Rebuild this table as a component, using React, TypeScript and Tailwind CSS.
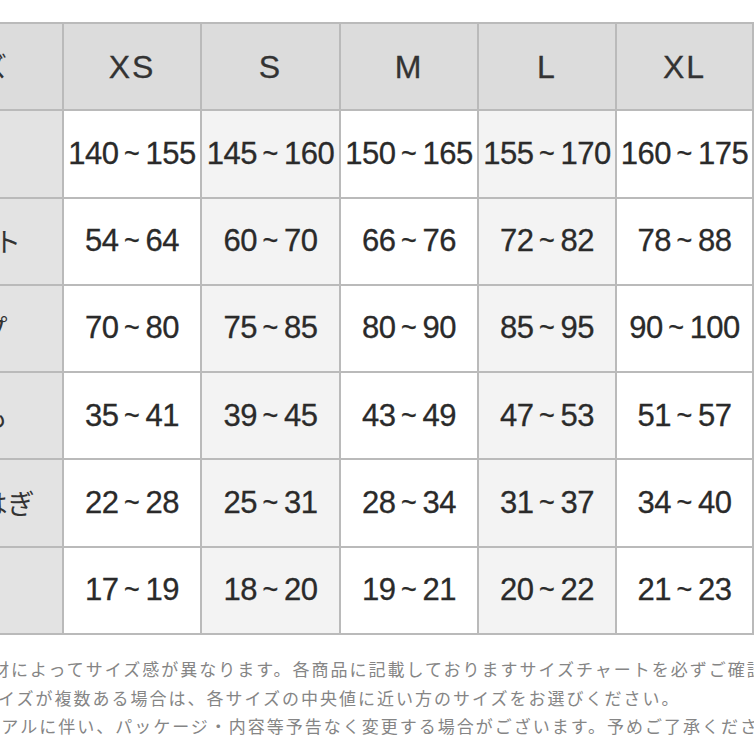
const sizes = ['XS', 'S', 'M', 'L', 'XL']

const rows: { label: string; values: [string, string][] }[] = [
  { label: '身長', values: [['140', '155'], ['145', '160'], ['150', '165'], ['155', '170'], ['160', '175']] },
  { label: 'ウエスト', values: [['54', '64'], ['60', '70'], ['66', '76'], ['72', '82'], ['78', '88']] },
  { label: 'ヒップ', values: [['70', '80'], ['75', '85'], ['80', '90'], ['85', '95'], ['90', '100']] },
  { label: '太もも', values: [['35', '41'], ['39', '45'], ['43', '49'], ['47', '53'], ['51', '57']] },
  { label: 'ふくらはぎ', values: [['22', '28'], ['25', '31'], ['28', '34'], ['31', '37'], ['34', '40']] },
  { label: '足首', values: [['17', '19'], ['18', '20'], ['19', '21'], ['20', '22'], ['21', '23']] },
]

const notes = [
  { text: '素材によってサイズ感が異なります。各商品に記載しておりますサイズチャートを必ずご確認ください。', cls: 'ml-[-27px]' },
  { text: 'サイズが複数ある場合は、各サイズの中央値に近い方のサイズをお選びください。', cls: 'ml-[-21px]' },
  { text: 'リニューアルに伴い、パッケージ・内容等予告なく変更する場合がございます。予めご了承ください。', cls: 'ml-[-74px]' },
]

const jp = { fontFamily: '"Noto Sans CJK JP", "Noto Sans", sans-serif' }
const latin = { fontFamily: '"Liberation Sans", Arial, sans-serif' }

function Range({ from, to }: { from: string; to: string }) {
  return (
    <span
      className="flex items-center justify-center text-[31px] tracking-[-0.5px] text-[#2a2a2a] [-webkit-text-stroke:0.3px_#2a2a2a]"
      style={latin}
    >
      <span>{from}</span>
      <span className="inline-block w-[27px] text-center tracking-normal text-[27px]">~</span>
      <span>{to}</span>
    </span>
  )
}

export default function App() {
  return (
    <div className="w-[754px] h-[754px] overflow-hidden bg-white">
      <div className="pt-[22px]">
        <div className="ml-[-130px] w-[884px] bg-[#bababa] p-[2px] grid grid-cols-[190px_136px_137px_136px_136px_135px] auto-rows-[85.3px] gap-[2px]">
          <div className="bg-[#dcdcdc] flex items-center justify-center text-[27px] text-[#333]" style={jp}>
            サイズ
          </div>
          {sizes.map((s) => (
            <div
              key={s}
              className="bg-[#dcdcdc] flex items-center justify-center text-[32px] tracking-[2px] text-[#333] [-webkit-text-stroke:0.3px_#333]"
              style={latin}
            >
              {s}
            </div>
          ))}
          {rows.map((r) => (
            <div key={r.label} className="contents">
              <div className="bg-[#e3e3e3] flex items-center justify-center text-[27px] text-[#333]" style={jp}>
                {r.label}
              </div>
              {r.values.map(([a, b], i) => (
                <div
                  key={i}
                  className={i % 2 === 1 ? 'bg-[#f3f3f3] flex items-center justify-center' : 'bg-white flex items-center justify-center'}
                >
                  <Range from={a} to={b} />
                </div>
              ))}
            </div>
          ))}
        </div>
        <div className="mt-[20px] flex flex-col text-[17px] leading-[28.5px] tracking-[2px] text-[#858585] whitespace-nowrap" style={jp}>
          {notes.map((n) => (
            <p key={n.text} className={n.cls}>
              {n.text}
            </p>
          ))}
        </div>
      </div>
    </div>
  )
}
